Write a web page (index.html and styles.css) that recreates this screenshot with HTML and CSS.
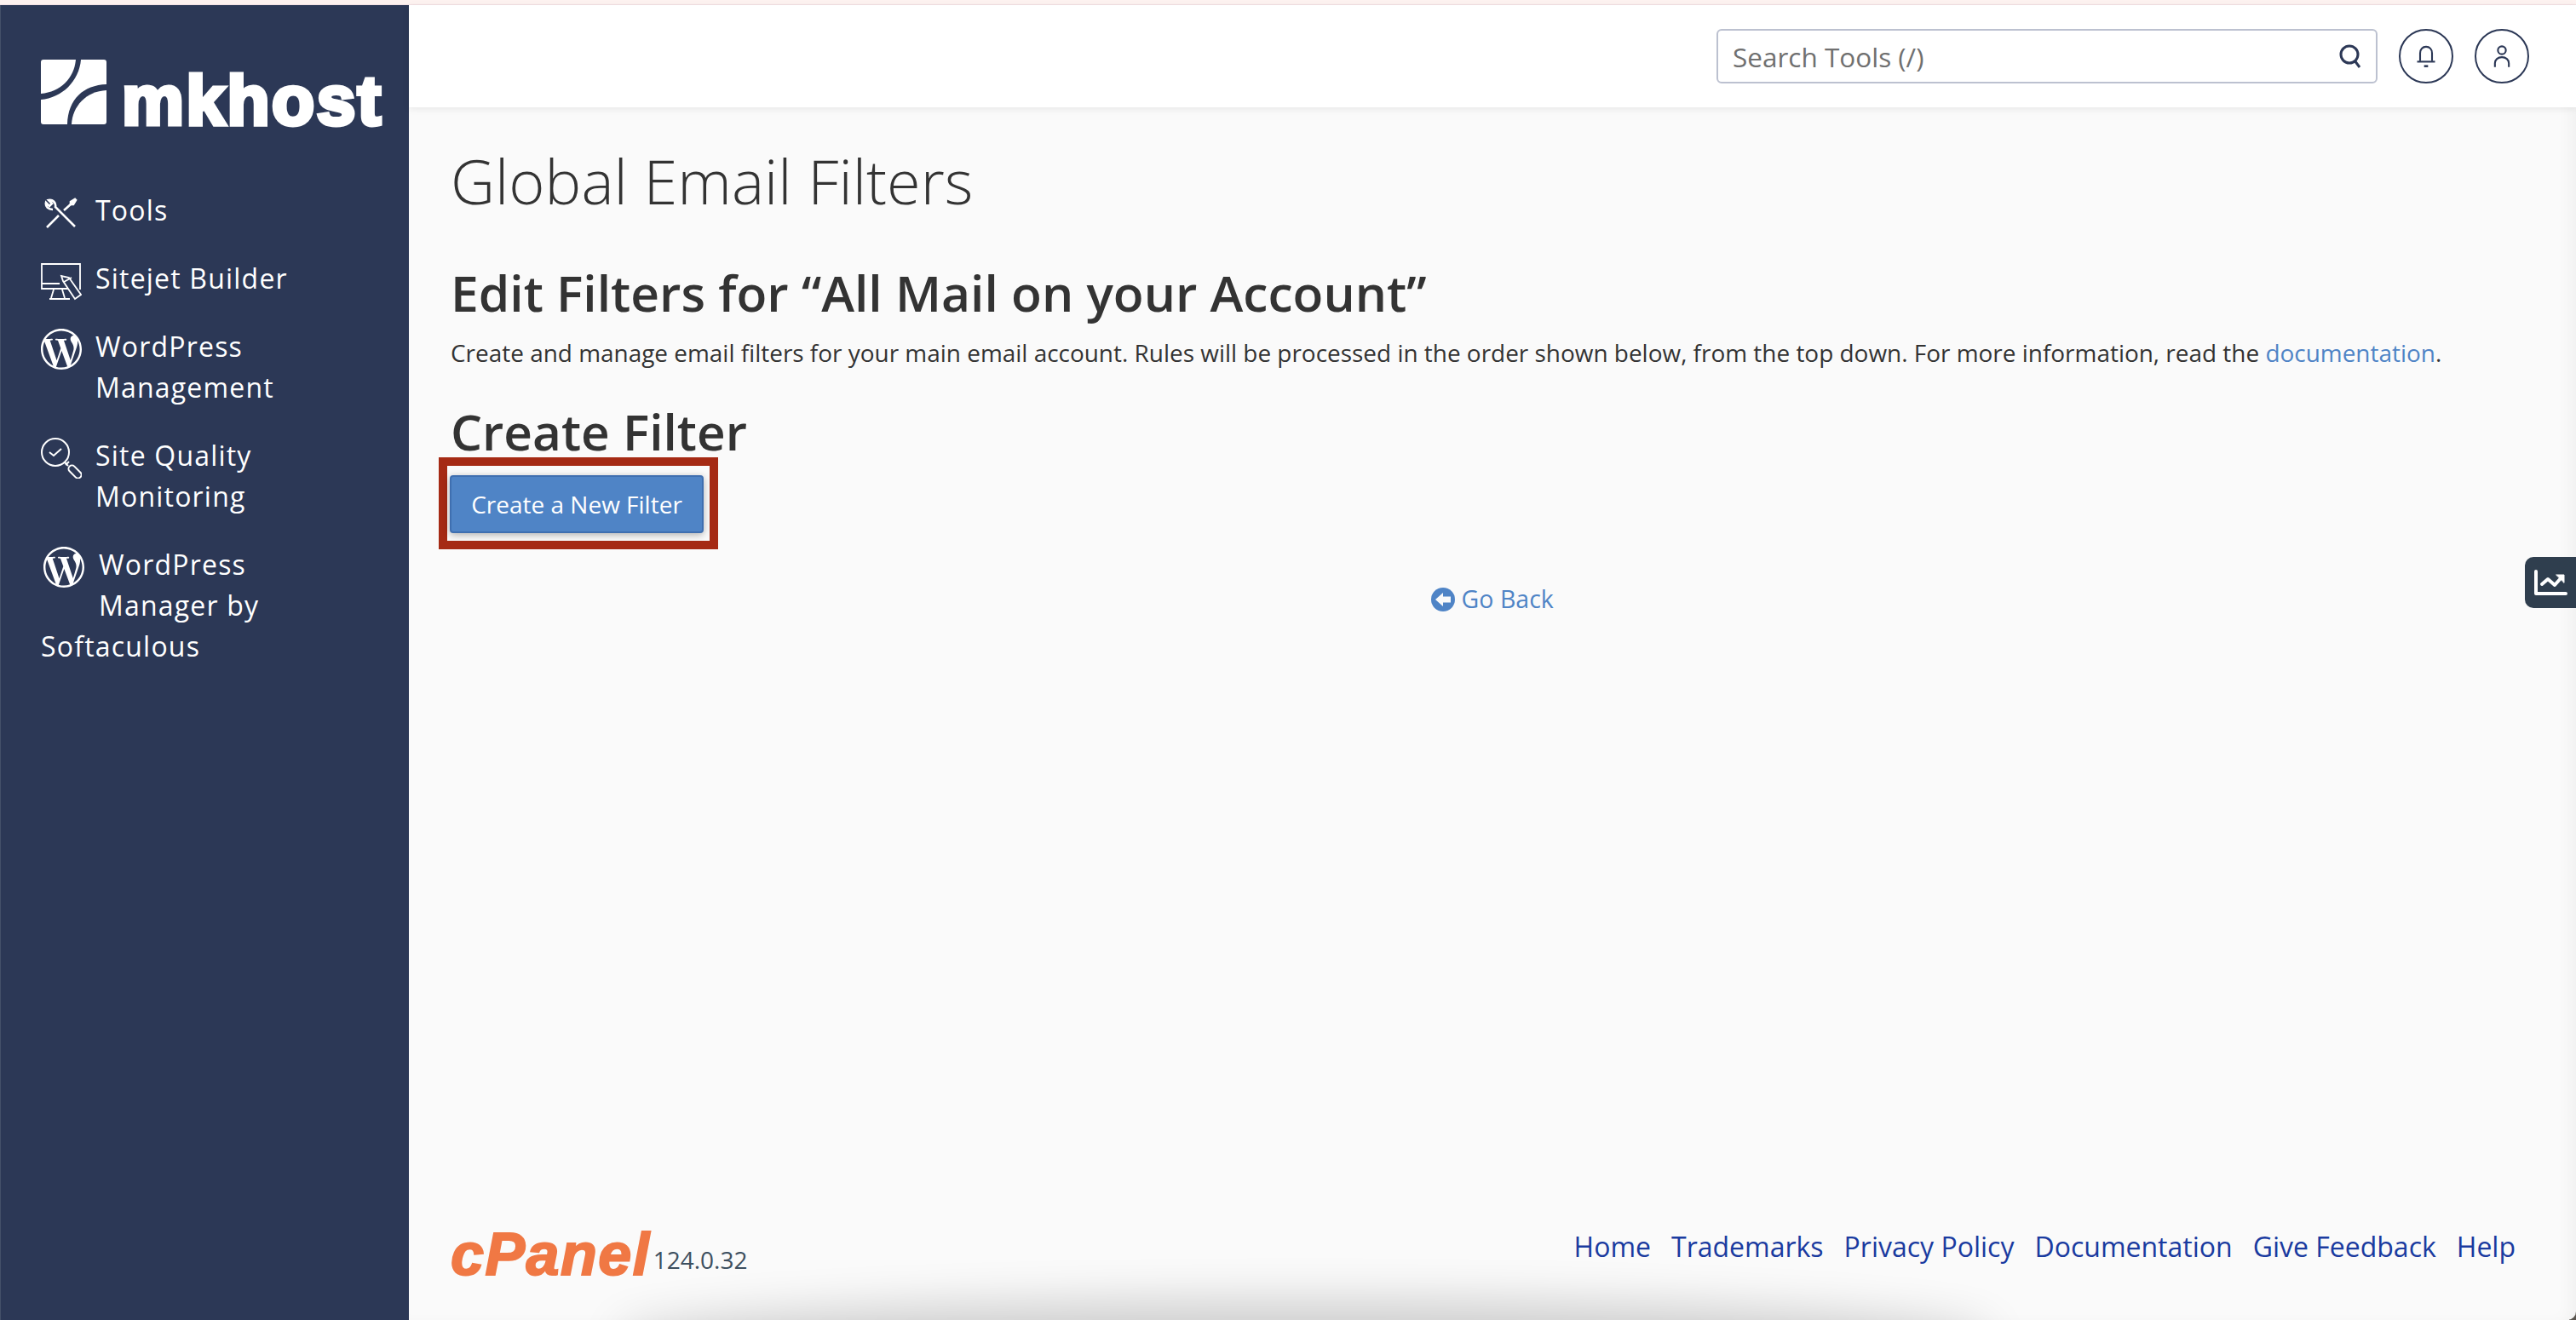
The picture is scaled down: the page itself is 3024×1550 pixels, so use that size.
FILE: index.html
```html
<!DOCTYPE html>
<html lang="en">
<head>
  <meta charset="UTF-8">
  <title>Global Email Filters</title>
  <link rel="stylesheet" href="styles.css">
</head>

<body>
  <div class="top-strip"></div>
  <div class="app">
    <aside class="sidebar">
      <div class="brand">
        <svg class="brand-mark" viewBox="0 0 77 76">
          <path fill="#fff" d="M3 0H41C39 22 23 38 0 40V3C0 1 1 0 3 0Z"/>
          <path fill="#fff" d="M47 0H74C76 0 77 1 77 3V29C50 30 32 46 31 76H3C1 76 0 75 0 73V47C25 45 45 25 47 0Z"/>
          <path fill="#fff" d="M77 36V73C77 75 76 76 74 76H36C37 55 53 37 77 36Z"/>
        </svg>
        <span class="brand-name">mkhost</span>
      </div>
      <nav class="side-nav">
        <a class="nav-item" href="#">
          <span class="nav-icon">
            <svg viewBox="0 0 48 48" fill="none" stroke="#fff" stroke-width="2.600">
              <path d="M7 41 21 27M27 21 36 13"/>
              <path d="M35 14 35 11 40 8 41 9 38 14Z" fill="#fff"/>
              <path d="M40 40 17 17C18 12 14 8 9 9L13 13 10 16 6 12C5 17 9 20 14 20"/>
            </svg>
          </span>Tools
        </a>
        <a class="nav-item" href="#">
          <span class="nav-icon">
            <svg viewBox="0 0 48 48" fill="none" stroke="#fff" stroke-width="1.800">
              <path d="M32 33H1V4H46V34"/>
              <path d="M1 27H22M15 34 12 44M25 34 28 44M10 45H34"/>
              <path d="M24 18 26 24 40 45 47 40 33 20ZM27 25 36 20"/>
            </svg>
          </span>Sitejet Builder
        </a>
        <a class="nav-item" href="#">
          <span class="nav-icon">
            <svg viewBox="0 0 24 24"><path fill="#fff" d="M21.469 6.825c.84 1.537 1.318 3.3 1.318 5.175 0 3.979-2.156 7.456-5.363 9.325l3.295-9.527c.615-1.54.82-2.771.82-3.864 0-.405-.026-.78-.07-1.11m-7.981.105c.647-.03 1.232-.105 1.232-.105.582-.075.514-.93-.067-.899 0 0-1.755.135-2.88.135-1.064 0-2.85-.15-2.85-.15-.585-.03-.661.855-.075.885 0 0 .54.061 1.125.09l1.68 4.605-2.37 7.08L5.354 6.9c.649-.03 1.234-.1 1.234-.1.585-.075.516-.93-.065-.896 0 0-1.746.138-2.874.138-.2 0-.438-.008-.69-.015C4.911 3.15 8.235 1.215 12 1.215c2.809 0 5.365 1.072 7.286 2.833-.046-.003-.091-.009-.141-.009-1.06 0-1.812.923-1.812 1.914 0 .89.513 1.643 1.06 2.531.411.72.89 1.643.89 2.977 0 .915-.354 1.994-.821 3.479l-1.075 3.585-3.9-11.61.001.014zM12 22.784c-1.059 0-2.081-.153-3.048-.437l3.237-9.406 3.315 9.087c.024.053.05.101.078.149-1.12.393-2.325.609-3.582.609M1.211 12c0-1.564.336-3.05.935-4.39L7.29 21.709C3.694 19.96 1.212 16.271 1.211 12M12 0C5.385 0 0 5.385 0 12s5.385 12 12 12 12-5.385 12-12S18.615 0 12 0"/></svg>
          </span>WordPress<br>Management
        </a>
        <a class="nav-item" href="#">
          <span class="nav-icon">
            <svg viewBox="0 0 48 48" fill="none" stroke="#fff" stroke-width="2">
              <circle cx="17" cy="17" r="16"/>
              <path d="M10 17 15 21 24 13"/>
              <path d="M28 29 32 33M33 28 29 32"/>
              <rect x="31" y="36" width="18" height="8" rx="4" transform="rotate(45 40 40)"/>
            </svg>
          </span>Site Quality<br>Monitoring
        </a>
        <a class="nav-item nav-item-last" href="#">
          <span class="nav-icon">
            <svg viewBox="0 0 24 24"><path fill="#fff" d="M21.469 6.825c.84 1.537 1.318 3.3 1.318 5.175 0 3.979-2.156 7.456-5.363 9.325l3.295-9.527c.615-1.54.82-2.771.82-3.864 0-.405-.026-.78-.07-1.11m-7.981.105c.647-.03 1.232-.105 1.232-.105.582-.075.514-.93-.067-.899 0 0-1.755.135-2.88.135-1.064 0-2.85-.15-2.85-.15-.585-.03-.661.855-.075.885 0 0 .54.061 1.125.09l1.68 4.605-2.37 7.08L5.354 6.9c.649-.03 1.234-.1 1.234-.1.585-.075.516-.93-.065-.896 0 0-1.746.138-2.874.138-.2 0-.438-.008-.69-.015C4.911 3.15 8.235 1.215 12 1.215c2.809 0 5.365 1.072 7.286 2.833-.046-.003-.091-.009-.141-.009-1.06 0-1.812.923-1.812 1.914 0 .89.513 1.643 1.06 2.531.411.72.89 1.643.89 2.977 0 .915-.354 1.994-.821 3.479l-1.075 3.585-3.9-11.61.001.014zM12 22.784c-1.059 0-2.081-.153-3.048-.437l3.237-9.406 3.315 9.087c.024.053.05.101.078.149-1.12.393-2.325.609-3.582.609M1.211 12c0-1.564.336-3.05.935-4.39L7.29 21.709C3.694 19.96 1.212 16.271 1.211 12M12 0C5.385 0 0 5.385 0 12s5.385 12 12 12 12-5.385 12-12S18.615 0 12 0"/></svg>
          </span>WordPress<br>Manager by<br>Softaculous
        </a>
      </nav>
    </aside>

    <div class="main">
      <header class="topbar">
        <div class="search">
          <span class="search-text">Search Tools (/)</span>
          <svg class="search-icon" viewBox="0 0 28 28" fill="none" stroke="#2c3856" stroke-width="3">
            <circle cx="13" cy="12" r="10"/>
            <path d="M19 19 25 27"/>
          </svg>
        </div>
        <div class="round-btn">
          <svg viewBox="0 0 24 24" fill="none" stroke="#2c3856" stroke-width="1.800">
            <path d="M6 17V9C6 5 8.500 2.500 12 2.500S18 5 18 9V17"/>
            <path d="M3 17.500H21"/>
            <path d="M10 22H14" stroke-width="2.200"/>
          </svg>
        </div>
        <div class="round-btn">
          <svg viewBox="0 0 24 24" fill="none" stroke="#2c3856" stroke-width="1.800">
            <circle cx="12" cy="6" r="4"/>
            <path d="M5 23V19C5 15.500 8 13 12 13S19 15.500 19 19V23"/>
          </svg>
        </div>
      </header>

      <div class="content">
        <h1>Global Email Filters</h1>
        <h2 class="edit-title">Edit Filters for “All Mail on your Account”</h2>
        <p class="intro">Create and manage email filters for your main email account. Rules will be processed in the order shown below, from the top down. For more information, read the <a href="#">documentation</a>.</p>
        <h2 class="create-title">Create Filter</h2>
        <div class="highlight">
          <button class="btn">Create a New Filter</button>
        </div>
        <div class="back">
          <a href="#">
            <svg viewBox="0 0 28 28">
              <circle cx="14" cy="14" r="14" fill="#4f84c6"/>
              <path fill="#fafafa" d="M5 14 14 6V10.500H23V17.500H14V22Z"/>
            </svg>
            Go Back
          </a>
        </div>
      </div>

      <footer class="footer">
        <div class="version">
          <span class="cpanel">cPanel</span>
          <span class="version-num">124.0.32</span>
        </div>
        <div class="footer-links">
          <a href="#">Home</a>
          <a href="#">Trademarks</a>
          <a href="#">Privacy Policy</a>
          <a href="#">Documentation</a>
          <a href="#">Give Feedback</a>
          <a href="#">Help</a>
        </div>
      </footer>

      <div class="bottom-shade"></div>
      <div class="window-corner"></div>
      <div class="stats-tab">
        <svg viewBox="0 0 40 32" fill="none" stroke="#fff" stroke-width="4" stroke-linecap="round" stroke-linejoin="round">
          <path d="M3 3V29H38"/>
          <path d="M10 18 17 12 25 19 33 10"/>
          <path d="M27 7H36V16Z" fill="#fff" stroke-width="1"/>
        </svg>
      </div>
    </div>
  </div>
</body>
</html>
```

FILE: styles.css
```css
html, body {
  margin: 0;
  padding: 0;
  height: 1550px;
  overflow: hidden;
}

body {
  font-family: "Open Sans", sans-serif;
  background-color: #fafafa;
  color: #333;
}

a {
  text-decoration: none;
}

.top-strip {
  height: 5px;
  background-color: #fdf2f0;
  border-bottom: 1px solid #f2e0e3;
}

.app {
  display: flex;
  height: 1544px;
}

/* sidebar */
.sidebar {
  width: 479px;
  flex-shrink: 0;
  background-color: #2c3856;
  border-left: 1px solid #445069;
  color: #fff;
}

.brand {
  display: flex;
  align-items: flex-end;
  gap: 18px;
  height: 76px;
  padding: 64px 0 0 47px;
}

.brand-mark {
  width: 77px;
  height: 76px;
}

.brand-name {
  font-family: "Liberation Sans", sans-serif;
  font-weight: bold;
  font-size: 82px;
  line-height: 56px;
  letter-spacing: 2.500px;
  -webkit-text-stroke: 5px #fff;
}

.side-nav {
  padding: 77px 0 0 47px;
}

.nav-item {
  display: block;
  color: #fff;
  font-size: 32px;
  line-height: 48px;
  letter-spacing: 1.200px;
  margin-bottom: 32px;
}

.nav-icon {
  float: left;
  width: 48px;
  height: 49px;
  margin-right: 16px;
}

.nav-icon svg {
  display: block;
  width: 48px;
  height: 48px;
  margin-top: 3px;
}

/* icon spans two lines here, third line runs back under it */
.nav-item-last .nav-icon {
  height: 95px;
  margin-left: 3px;
  margin-right: 17px;
}

/* main column */
.main {
  position: relative;
  flex: 1;
  display: flex;
  flex-direction: column;
  min-width: 0;
  box-shadow: inset -12px 0 20px -8px rgba(0, 0, 0, 0.05);
}

.topbar {
  display: flex;
  justify-content: flex-end;
  align-items: center;
  gap: 25px;
  height: 120px;
  padding-right: 55px;
  background-color: #fff;
  box-shadow: 0 2px 8px rgba(0, 0, 0, 0.08);
}

.search {
  display: flex;
  align-items: center;
  justify-content: space-between;
  box-sizing: border-box;
  width: 776px;
  height: 64px;
  padding: 0 16px 0 17px;
  border: 2px solid #bcc1d0;
  border-radius: 6px;
}

.search-text {
  font-size: 31.500px;
  color: #707070;
}

.search-icon {
  width: 28px;
  height: 28px;
}

.round-btn {
  display: flex;
  align-items: center;
  justify-content: center;
  box-sizing: border-box;
  width: 64px;
  height: 64px;
  border: 2px solid #2c3856;
  border-radius: 50%;
}

.round-btn svg {
  width: 28px;
  height: 28px;
}

.content {
  padding: 0 49px;
}

h1 {
  font-weight: 300;
  font-size: 72px;
  line-height: 100px;
  margin: 36px 0 0;
}

.edit-title {
  font-weight: 600;
  font-size: 58.700px;
  line-height: 80px;
  margin: 41px 0 0;
}

.intro {
  font-size: 27.950px;
  line-height: 40px;
  margin: 11px 0 0;
}

.intro a {
  color: #4f84c6;
}

.create-title {
  font-weight: 600;
  font-size: 58.500px;
  line-height: 72px;
  margin: 36px 0 -5px;
}

.highlight {
  display: inline-block;
  margin: 0 0 0 -14px;
  padding: 11px 7px 9px 3px;
  border: 10px solid #a52a14;
}

.btn {
  display: block;
  box-sizing: border-box;
  width: 298px;
  height: 68px;
  padding: 0;
  font-family: "Open Sans", sans-serif;
  font-size: 28px;
  color: #fff;
  background-color: #4f84c6;
  border: 2px solid #3f6fb0;
  border-radius: 4px;
  box-shadow: 0 2px 8px rgba(0, 0, 0, 0.3);
}

.back {
  margin-top: 36px;
  text-align: center;
  font-size: 28.500px;
  line-height: 44px;
}

.back a {
  color: #4f84c6;
}

.back svg {
  width: 28px;
  height: 28px;
  vertical-align: -4px;
}

.footer {
  position: relative;
  z-index: 1;
  display: flex;
  justify-content: space-between;
  align-items: flex-end;
  margin-top: auto;
  padding: 0 71px 63px 49px;
}

.version {
  display: flex;
  align-items: flex-end;
  gap: 3px;
  margin-bottom: -16px;
}

.cpanel {
  font-family: "Liberation Sans", sans-serif;
  font-weight: bold;
  font-style: italic;
  font-size: 70px;
  line-height: 60px;
  letter-spacing: 1.500px;
  color: #f07844;
  -webkit-text-stroke: 2px #f07844;
}

.version-num {
  font-size: 28px;
  margin-bottom: 5px;
  color: #3d4f5f;
}

.footer-links {
  display: flex;
  gap: 24px;
  font-size: 32px;
  line-height: 46px;
}

.footer-links a {
  color: #1a3ba0;
}

/* page shadow peeking from behind, bottom edge */
.bottom-shade {
  position: absolute;
  left: 260px;
  right: 700px;
  bottom: -50px;
  height: 50px;
  border-radius: 50%;
  box-shadow: 0 -6px 50px 20px rgba(0, 0, 0, 0.16);
}

.window-corner {
  position: absolute;
  right: 0;
  bottom: 0;
  width: 10px;
  height: 24px;
  overflow: hidden;
  border-bottom-right-radius: 10px;
  box-shadow: 6px 6px 0 4px #5a5650;
}

.stats-tab {
  position: absolute;
  top: 648px;
  right: 0;
  display: flex;
  align-items: center;
  box-sizing: border-box;
  width: 60px;
  height: 60px;
  padding-left: 10px;
  background-color: #2f3e4e;
  border-radius: 10px 0 0 10px;
}

.stats-tab svg {
  width: 40px;
  height: 32px;
}
```
